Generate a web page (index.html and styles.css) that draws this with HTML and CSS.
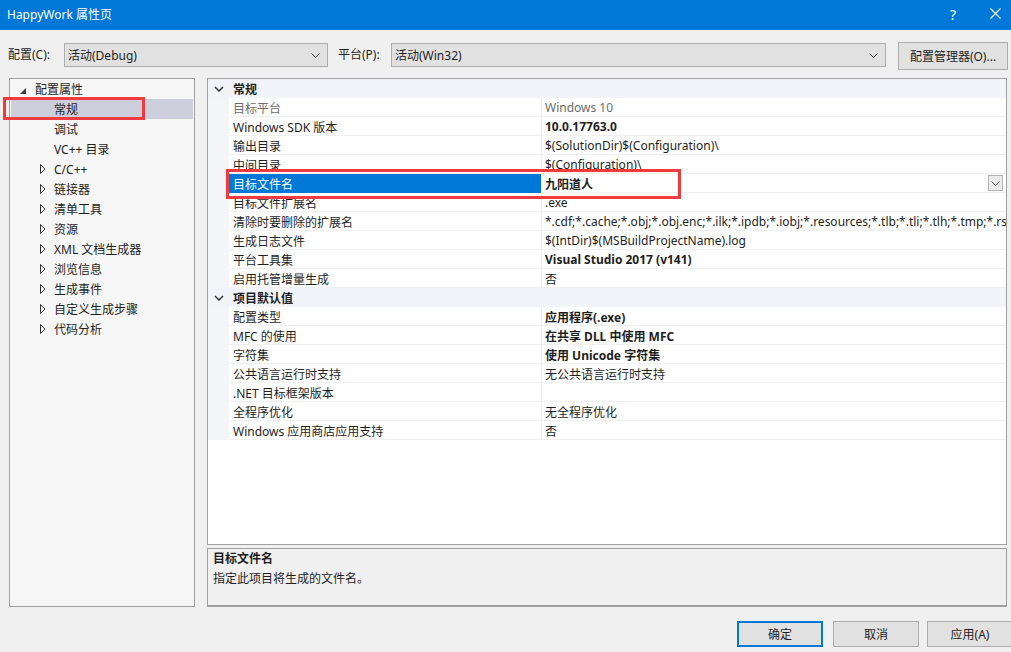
FILE: index.html
```html
<!DOCTYPE html>
<html lang="zh-CN">
<head>
    <meta charset="UTF-8">
    <title>HappyWork 属性页</title>
    <link rel="stylesheet" href="styles.css">
</head>
<body>
    <div class="titlebar">
        <span class="title">HappyWork 属性页</span>
        <span class="title-help">?</span>
        <span class="title-close">
            <svg width="11" height="11" viewBox="0 0 11 11"><path d="M0.5 0.5 L10.5 10.5 M10.5 0.5 L0.5 10.5" stroke="#fff" stroke-width="1.1" fill="none"/></svg>
        </span>
    </div>

    <div class="toolbar">
        <label class="tb-label label-config">配置(C):</label>
        <div class="combo combo-config">
            <span>活动(Debug)</span>
            <svg class="chev" width="9" height="5" viewBox="0 0 9 5"><path d="M0.5 0.5 L4.5 4.5 L8.5 0.5" stroke="#444" fill="none"/></svg>
        </div>
        <label class="tb-label label-platform">平台(P):</label>
        <div class="combo combo-platform">
            <span>活动(Win32)</span>
            <svg class="chev" width="9" height="5" viewBox="0 0 9 5"><path d="M0.5 0.5 L4.5 4.5 L8.5 0.5" stroke="#444" fill="none"/></svg>
        </div>
        <button class="btn btn-manager">配置管理器(O)...</button>
    </div>

    <div class="main">
        <div class="tree">
            <div class="tree-row level0">
                <span class="exp"><svg width="6" height="6" viewBox="0 0 6 6"><polygon points="6,0 6,6 0,6" fill="#3c3c3c"/></svg></span>配置属性
            </div>
            <div class="tree-row level1 selected"><span class="exp"></span>常规</div>
            <div class="tree-row level1"><span class="exp"></span>调试</div>
            <div class="tree-row level1"><span class="exp"></span>VC++ 目录</div>
            <div class="tree-row level1"><span class="exp"><svg width="6" height="10" viewBox="0 0 6 10"><polygon points="0.5,0.5 5,5 0.5,9.5" fill="none" stroke="#333"/></svg></span>C/C++</div>
            <div class="tree-row level1"><span class="exp"><svg width="6" height="10" viewBox="0 0 6 10"><polygon points="0.5,0.5 5,5 0.5,9.5" fill="none" stroke="#333"/></svg></span>链接器</div>
            <div class="tree-row level1"><span class="exp"><svg width="6" height="10" viewBox="0 0 6 10"><polygon points="0.5,0.5 5,5 0.5,9.5" fill="none" stroke="#333"/></svg></span>清单工具</div>
            <div class="tree-row level1"><span class="exp"><svg width="6" height="10" viewBox="0 0 6 10"><polygon points="0.5,0.5 5,5 0.5,9.5" fill="none" stroke="#333"/></svg></span>资源</div>
            <div class="tree-row level1"><span class="exp"><svg width="6" height="10" viewBox="0 0 6 10"><polygon points="0.5,0.5 5,5 0.5,9.5" fill="none" stroke="#333"/></svg></span>XML 文档生成器</div>
            <div class="tree-row level1"><span class="exp"><svg width="6" height="10" viewBox="0 0 6 10"><polygon points="0.5,0.5 5,5 0.5,9.5" fill="none" stroke="#333"/></svg></span>浏览信息</div>
            <div class="tree-row level1"><span class="exp"><svg width="6" height="10" viewBox="0 0 6 10"><polygon points="0.5,0.5 5,5 0.5,9.5" fill="none" stroke="#333"/></svg></span>生成事件</div>
            <div class="tree-row level1"><span class="exp"><svg width="6" height="10" viewBox="0 0 6 10"><polygon points="0.5,0.5 5,5 0.5,9.5" fill="none" stroke="#333"/></svg></span>自定义生成步骤</div>
            <div class="tree-row level1"><span class="exp"><svg width="6" height="10" viewBox="0 0 6 10"><polygon points="0.5,0.5 5,5 0.5,9.5" fill="none" stroke="#333"/></svg></span>代码分析</div>
        </div>

        <div class="right">
            <div class="grid">
                <div class="grid-cat">
                    <span class="gutter"><svg width="10" height="6" viewBox="0 0 10 6"><path d="M1 1 L5 5 L9 1" stroke="#333" stroke-width="1.5" fill="none"/></svg></span>
                    <span class="cat-name">常规</span>
                </div>
                <div class="grid-row disabled"><span class="gutter"></span><span class="name">目标平台</span><span class="value">Windows 10</span></div>
                <div class="grid-row"><span class="gutter"></span><span class="name">Windows SDK 版本</span><span class="value bold">10.0.17763.0</span></div>
                <div class="grid-row"><span class="gutter"></span><span class="name">输出目录</span><span class="value">$(SolutionDir)$(Configuration)\</span></div>
                <div class="grid-row"><span class="gutter"></span><span class="name">中间目录</span><span class="value">$(Configuration)\</span></div>
                <div class="grid-row active">
                    <span class="gutter"></span><span class="name">目标文件名</span>
                    <span class="value bold">九阳道人
                        <span class="drop"><svg width="9" height="5" viewBox="0 0 9 5"><path d="M0.5 0.5 L4.5 4.5 L8.5 0.5" stroke="#555" fill="none"/></svg></span>
                    </span>
                </div>
                <div class="grid-row"><span class="gutter"></span><span class="name">目标文件扩展名</span><span class="value">.exe</span></div>
                <div class="grid-row"><span class="gutter"></span><span class="name">清除时要删除的扩展名</span><span class="value">*.cdf;*.cache;*.obj;*.obj.enc;*.ilk;*.ipdb;*.iobj;*.resources;*.tlb;*.tli;*.tlh;*.tmp;*.rsp;*.pgc;*.pgd;*.meta;*.tlog;*.manifest;*.res;*.pch;*.exp</span></div>
                <div class="grid-row"><span class="gutter"></span><span class="name">生成日志文件</span><span class="value">$(IntDir)$(MSBuildProjectName).log</span></div>
                <div class="grid-row"><span class="gutter"></span><span class="name">平台工具集</span><span class="value bold">Visual Studio 2017 (v141)</span></div>
                <div class="grid-row"><span class="gutter"></span><span class="name">启用托管增量生成</span><span class="value">否</span></div>
                <div class="grid-cat">
                    <span class="gutter"><svg width="10" height="6" viewBox="0 0 10 6"><path d="M1 1 L5 5 L9 1" stroke="#333" stroke-width="1.5" fill="none"/></svg></span>
                    <span class="cat-name">项目默认值</span>
                </div>
                <div class="grid-row"><span class="gutter"></span><span class="name">配置类型</span><span class="value bold">应用程序(.exe)</span></div>
                <div class="grid-row"><span class="gutter"></span><span class="name">MFC 的使用</span><span class="value bold">在共享 DLL 中使用 MFC</span></div>
                <div class="grid-row"><span class="gutter"></span><span class="name">字符集</span><span class="value bold">使用 Unicode 字符集</span></div>
                <div class="grid-row"><span class="gutter"></span><span class="name">公共语言运行时支持</span><span class="value">无公共语言运行时支持</span></div>
                <div class="grid-row"><span class="gutter"></span><span class="name">.NET 目标框架版本</span><span class="value"></span></div>
                <div class="grid-row"><span class="gutter"></span><span class="name">全程序优化</span><span class="value">无全程序优化</span></div>
                <div class="grid-row"><span class="gutter"></span><span class="name">Windows 应用商店应用支持</span><span class="value">否</span></div>
            </div>

            <div class="desc">
                <div class="desc-title">目标文件名</div>
                <div class="desc-text">指定此项目将生成的文件名。</div>
            </div>
        </div>
    </div>

    <div class="footer">
        <button class="btn btn-ok">确定</button>
        <button class="btn btn-cancel">取消</button>
        <button class="btn btn-apply">应用(A)</button>
    </div>

    <!-- 标注框 -->
    <div class="mark mark-tree"></div>
    <div class="mark mark-grid"></div>
</body>
</html>
```

FILE: styles.css
```css
body {
    margin: 0;
    width: 1011px;
    height: 652px;
    overflow: hidden;
    position: relative;
    background-color: #f0f0f0;
    font-family: "Noto Sans", "Noto Sans CJK SC", sans-serif;
    font-size: 12px;
    color: #1e1e1e;
}

/* 标题栏 */
.titlebar {
    height: 30px;
    background-color: #0078d7;
    color: #fff;
    display: flex;
    align-items: center;
    padding-left: 7px;
    box-sizing: border-box;
}

.title {
    flex: 1;
    margin-top: -2px;
}

.title-help {
    font-size: 14px;
    width: 40px;
    margin-top: -2px;
}

.title-close {
    width: 21px;
    display: flex;
    margin-top: -3px;
}

/* 配置行 */
.toolbar {
    display: flex;
    align-items: flex-start;
    height: 28px;
    margin-top: 12px;
    padding-left: 8px;
}

.tb-label {
    line-height: 26px;
}

.label-config {
    width: 56px;
}

.label-platform {
    width: 53px;
    margin-left: 10px;
}

.combo {
    height: 24px;
    margin-top: 1px;
    box-sizing: border-box;
    background-color: #e1e1e1;
    border: 1px solid #adadad;
    display: flex;
    align-items: center;
    justify-content: space-between;
    padding: 0 7px 0 3px;
}

.combo-config {
    width: 264px;
}

.combo-platform {
    width: 495px;
}

.btn {
    font-family: inherit;
    font-size: 12px;
    color: #1e1e1e;
    background-color: #e1e1e1;
    border: 1px solid #adadad;
    box-sizing: border-box;
    padding: 0;
}

.btn-manager {
    width: 110px;
    height: 28px;
    margin-left: 12px;
}

/* 主区域 */
.main {
    display: flex;
    margin-top: 8px;
    padding-left: 9px;
    height: 529px;
}

.tree {
    width: 186px;
    box-sizing: border-box;
    border: 1px solid #a0a0a0;
    background-color: #f6f6f6;
    padding: 0 1px;
}

.tree-row {
    height: 20px;
    display: flex;
    align-items: center;
    white-space: nowrap;
}

.tree-row .exp {
    width: 16px;
    display: flex;
    align-items: center;
    flex-shrink: 0;
}

.tree-row.level0 {
    padding-left: 8px;
}

.tree-row.level0 .exp {
    padding-left: 1px;
    width: 15px;
    margin-top: 3px;
}

.tree-row.level1 {
    padding-left: 27px;
}

.tree-row.level1 .exp {
    padding-left: 2px;
    width: 14px;
}

.tree-row.selected {
    background-color: #cccedb;
}

.right {
    margin-left: 12px;
    width: 800px;
    display: flex;
    flex-direction: column;
}

.grid {
    height: 467px;
    box-sizing: border-box;
    border: 1px solid #a0a0a0;
    background-color: #fff;
    overflow: hidden;
}

.grid-cat {
    height: 19px;
    display: flex;
    align-items: center;
    background-color: #f2f4f9;
    font-weight: bold;
}

.gutter {
    width: 21px;
    height: 100%;
    flex-shrink: 0;
    display: flex;
    align-items: center;
    justify-content: center;
    background-color: #f4f5f8;
}

.grid-cat .gutter {
    background-color: transparent;
}

.cat-name {
    padding-left: 4px;
}

.grid-row {
    height: 19px;
    display: flex;
    white-space: nowrap;
}

.grid-row .name,
.grid-row .value {
    box-sizing: border-box;
    border-bottom: 1px solid #f0f0f0;
    display: flex;
    align-items: center;
    overflow: hidden;
    padding-top: 1px;
}

.grid-row .name {
    width: 312px;
    padding-left: 4px;
}

.grid-row .value {
    flex: 1;
    padding-left: 3px;
    border-left: 1px solid #f0f0f0;
    position: relative;
}

.bold {
    font-weight: bold;
}

.grid-row.disabled {
    color: #6d6d6d;
}

.grid-row.active .name {
    background-color: #0078d7;
    color: #fff;
    border-bottom-color: #0078d7;
}

.drop {
    position: absolute;
    right: 3px;
    top: 1px;
    width: 15px;
    height: 16px;
    box-sizing: border-box;
    border: 1px solid #b4b4b4;
    background-color: #ececec;
    display: flex;
    align-items: center;
    justify-content: center;
}

.desc {
    margin-top: 3px;
    height: 59px;
    box-sizing: border-box;
    border: 1px solid #a0a0a0;
    border-bottom-width: 2px;
    padding-left: 5px;
    line-height: 20px;
}

.desc-title {
    font-weight: bold;
}

/* 底部按钮 */
.footer {
    display: flex;
    margin-top: 14px;
    padding-left: 737px;
}

.footer .btn {
    width: 86px;
    height: 26px;
    flex-shrink: 0;
}

.btn-ok {
    border: 2px solid #0078d7;
}

.btn-cancel {
    margin-left: 10px;
}

.btn-apply {
    margin-left: 8px;
}

/* 红色标注框 */
.mark {
    position: absolute;
    box-sizing: border-box;
    border: 3px solid #ef3b3f;
}

.mark-tree {
    left: 3px;
    top: 97px;
    width: 142px;
    height: 23px;
}

.mark-grid {
    left: 226px;
    top: 169px;
    width: 455px;
    height: 30px;
}
```
